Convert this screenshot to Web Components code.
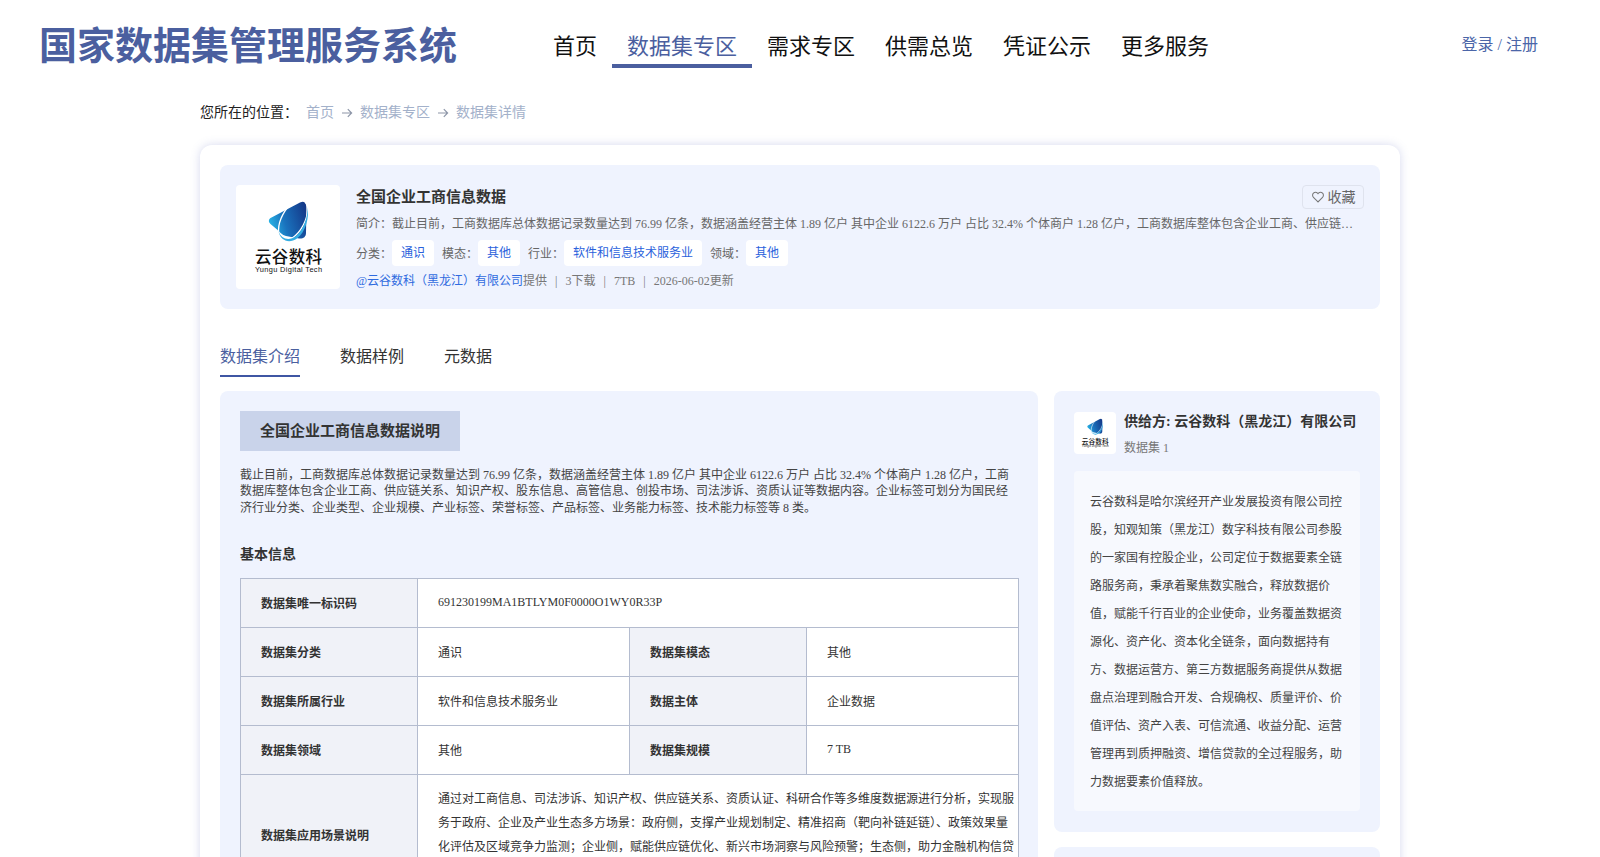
<!DOCTYPE html>
<html lang="zh">
<head>
<meta charset="utf-8">
<title>国家数据集管理服务系统</title>
<style>
	html, body { margin: 0; padding: 0; background: #fff; overflow: hidden; height: 857px; }
	body { font-family: "Liberation Serif", "Noto Sans CJK SC", serif; color: #333; }
</style>
</head>
<body>
<app-header></app-header>
<bread-crumb></bread-crumb>
<page-card>
	<data-summary></data-summary>
	<tab-bar></tab-bar>
	<div style="display:flex;gap:16px;align-items:flex-start">
		<intro-panel style="flex:0 0 817px"></intro-panel>
		<div style="flex:1;display:flex;flex-direction:column;gap:15px">
			<provider-card></provider-card>
			<side-panel></side-panel>
		</div>
	</div>
</page-card>

<script>
const FONT = `"Liberation Serif", "Noto Sans CJK SC", serif`;

class BrandLogo extends HTMLElement {
	constructor() {
		super();
		const id = 'g' + Math.random().toString(36).slice(2, 7);
		this.attachShadow({mode: 'open'}).innerHTML = `
			<style>
				:host { display: block; background: #fff; border-radius: 4px; overflow: hidden; }
				svg { display: block; width: 100%; height: 100%; }
				text { font-family: "Noto Sans CJK SC", sans-serif; fill: #111; }
			</style>
			<svg viewBox="0 0 104 104" xmlns="http://www.w3.org/2000/svg">
				<defs>
					<linearGradient id="${id}" x1="0" y1="0.6" x2="1" y2="0.3">
						<stop offset="0" stop-color="#27b4e6"/>
						<stop offset="0.4" stop-color="#1a72bd"/>
						<stop offset="1" stop-color="#143a8a"/>
					</linearGradient>
				</defs>
				<path d="M64 17.5 C68 15.5 70.5 17.5 70.5 21.5 L70 48 C70 52 67 54 63 53.5 L50 51 C46 50 43.5 47 41 44.5 L34.5 39 C32 36.5 32.5 34 35.5 32.5 Z" fill="url(#${id})"/>
				<ellipse cx="57" cy="35" rx="22" ry="11.5" transform="rotate(-62 57 35)" fill="none" stroke="#fff" stroke-width="1.3"/>
				<path d="M42.5 46 C45 54 53 56.5 60 51 C67.5 45 72 32 71.5 22 C73.5 33 69.5 47 61 53.5 C52.5 59.5 44 55 42.5 46 Z" fill="#35ade2"/>
				<text x="52.5" y="78" text-anchor="middle" font-size="16.5" font-weight="500" textLength="67">云谷数科</text>
				<text x="52.5" y="87" text-anchor="middle" font-size="7.4" textLength="67" style="font-family:'Liberation Sans',sans-serif">Yungu Digital Tech</text>
			</svg>`;
	}
}
customElements.define('brand-logo', BrandLogo);

const NavTemplate = document.createElement('template');
NavTemplate.innerHTML = `
	<style>
		:host { display: flex; align-items: flex-start; height: 91px; font-family: ${FONT}; box-sizing: border-box; padding: 0 62px 0 39px; }
		.title { font-size: 38px; font-weight: 700; color: #4b5f9f; line-height: 40px; margin-top: 26px; white-space: nowrap; width: 499px; }
		nav { display: flex; height: 68px; }
		nav a { display: block; box-sizing: border-box; height: 68px; padding: 35px 15px 0; font-size: 22px; line-height: 24px; color: #111; white-space: nowrap; }
		nav a.active { color: #4b5f9f; border-bottom: 4px solid #4b5f9f; }
		.login { margin-left: auto; font-size: 16px; line-height: 20px; margin-top: 35px; color: #4b66a8; white-space: nowrap; }
	</style>
	<div class="title">国家数据集管理服务系统</div>
	<nav>
		<a>首页</a><a class="active">数据集专区</a><a>需求专区</a><a>供需总览</a><a>凭证公示</a><a>更多服务</a>
	</nav>
	<div class="login">登录 / 注册</div>
`;
class AppHeader extends HTMLElement {
	constructor() {
		super();
		this.attachShadow({mode: 'open'}).append(NavTemplate.content.cloneNode(true));
	}
}
customElements.define('app-header', AppHeader);

class BreadCrumb extends HTMLElement {
	constructor() {
		super();
		const arrow = `<svg viewBox="0 0 12 10"><path d="M1 5h9.5M6.8 1.2 10.6 5 6.8 8.8" fill="none" stroke="#8d96a8" stroke-width="1.2"/></svg>`;
		this.attachShadow({mode: 'open'}).innerHTML = `
			<style>
				:host { display: flex; align-items: center; width: 1200px; margin: 0 auto; height: 40px; font-family: ${FONT}; font-size: 14px; color: #222; }
				a { color: #a3b1ca; }
				.here { margin-right: 8px; }
				svg { width: 12px; height: 10px; margin: 3px 7px 0; }
			</style>
			<span class="here">您所在的位置：</span>
			<a>首页</a>${arrow}<a>数据集专区</a>${arrow}<a>数据集详情</a>`;
	}
}
customElements.define('bread-crumb', BreadCrumb);

class PageCard extends HTMLElement {
	constructor() {
		super();
		this.attachShadow({mode: 'open'}).innerHTML = `
			<style>
				:host { display: block; box-sizing: border-box; width: 1200px; margin: 14px auto 0; padding: 20px 20px 24px; background: #fff; border-radius: 12px; box-shadow: 0 0 10px rgba(120, 130, 200, .3); font-family: ${FONT}; }
			</style>
			<slot></slot>`;
	}
}
customElements.define('page-card', PageCard);

class DataSummary extends HTMLElement {
	constructor() {
		super();
		this.attachShadow({mode: 'open'}).innerHTML = `
			<style>
				:host { display: flex; gap: 16px; box-sizing: border-box; height: 144px; padding: 20px 16px; background: #eff3fe; border-radius: 8px; }
				brand-logo { flex: 0 0 104px; width: 104px; height: 104px; }
				.body { flex: 1; min-width: 0; position: relative; }
				h2 { margin: 0; padding-top: 2px; font-size: 15px; line-height: 20px; font-weight: 700; color: #333; }
				.desc { margin-top: 7px; padding-right: 8px; font-size: 12px; line-height: 20px; color: #666; white-space: nowrap; overflow: hidden; text-overflow: ellipsis; }
				.tags { display: flex; align-items: center; margin-top: 6px; height: 26px; font-size: 12px; color: #666; }
				.tags b { font-weight: 400; }
				.tags span { background: #fff; color: #2a62dc; border-radius: 4px; padding: 0 9px; line-height: 26px; margin-right: 8px; }
				.meta { margin-top: 5px; font-size: 12px; line-height: 20px; color: #777; white-space: nowrap; }
				.meta a { color: #2f6bdf; }
				.meta i { font-style: normal; padding: 0 8px; }
				.fav { position: absolute; top: 0; right: 0; box-sizing: border-box; height: 24px; width: 62px; padding-bottom: 2px; display: flex; align-items: center; justify-content: center; gap: 3px; border: 1px solid #dfe3ee; border-radius: 4px; font-size: 14px; color: #666; }
				.fav svg { width: 14px; height: 14px; margin-top: 2px; }
			</style>
			<brand-logo></brand-logo>
			<div class="body">
				<h2>全国企业工商信息数据</h2>
				<div class="desc">简介：截止目前，工商数据库总体数据记录数量达到 76.99 亿条，数据涵盖经营主体 1.89 亿户 其中企业 6122.6 万户 占比 32.4% 个体商户 1.28 亿户，工商数据库整体包含企业工商、供应链关系、知识产权、股东信息、高管信息、创投市场、司法涉诉、资质认证等数据内容。</div>
				<div class="tags"><b>分类：</b><span>通识</span><b>模态：</b><span>其他</span><b>行业：</b><span>软件和信息技术服务业</span><b>领域：</b><span>其他</span></div>
				<div class="meta"><a>@云谷数科（黑龙江）有限公司</a>提供<i>|</i>3下载<i>|</i>7TB<i>|</i>2026-06-02更新</div>
				<div class="fav"><svg viewBox="0 0 24 24"><path d="M12 20.5 4.2 12.6a5 5 0 0 1 0-7.1 5 5 0 0 1 7 0l.8.8.8-.8a5 5 0 0 1 7 0 5 5 0 0 1 0 7.1Z" fill="none" stroke="#777" stroke-width="1.8"/></svg>收藏</div>
			</div>`;
	}
}
customElements.define('data-summary', DataSummary);

class TabBar extends HTMLElement {
	constructor() {
		super();
		this.attachShadow({mode: 'open'}).innerHTML = `
			<style>
				:host { display: flex; gap: 40px; height: 82px; padding-top: 15px; box-sizing: border-box; align-items: flex-start; }
				a { display: block; box-sizing: border-box; height: 53px; padding-top: 23px; font-size: 16px; line-height: 20px; color: #333; }
				a.active { color: #4b5f9f; border-bottom: 2px solid #3f56a3; }
			</style>
			<a class="active">数据集介绍</a><a>数据样例</a><a>元数据</a>`;
	}
}
customElements.define('tab-bar', TabBar);

class InfoTable extends HTMLElement {
	constructor() {
		super();
		this.attachShadow({mode: 'open'}).innerHTML = `
			<style>
				:host { display: block; font-size: 12px; color: #333; }
				table { width: 778px; border-collapse: collapse; table-layout: fixed; background: #fff; }
				td, th { border: 1px solid #b4bccf; padding: 0 0 0 20px; height: 49px; text-align: left; box-sizing: border-box; }
				th { background: #f0f2f8; font-weight: 700; }
				.long { line-height: 24px; padding: 12px 0 12px 20px; }
			</style>
			<table>
				<colgroup><col style="width:177px"><col style="width:212px"><col style="width:177px"><col style="width:212px"></colgroup>
				<tr><th>数据集唯一标识码</th><td colspan="3">691230199MA1BTLYM0F0000O1WY0R33P</td></tr>
				<tr><th>数据集分类</th><td>通识</td><th>数据集模态</th><td>其他</td></tr>
				<tr><th>数据集所属行业</th><td>软件和信息技术服务业</td><th>数据主体</th><td>企业数据</td></tr>
				<tr><th>数据集领域</th><td>其他</td><th>数据集规模</th><td>7 TB</td></tr>
				<tr><th>数据集应用场景说明</th><td colspan="3" class="long">通过对工商信息、司法涉诉、知识产权、供应链关系、资质认证、科研合作等多维度数据源进行分析，实现服务于政府、企业及产业生态多方场景：政府侧，支撑产业规划制定、精准招商（靶向补链延链）、政策效果量化评估及区域竞争力监测；企业侧，赋能供应链优化、新兴市场洞察与风险预警；生态侧，助力金融机构信贷决策与风险定价，促进产业协同发展。</td></tr>
			</table>`;
	}
}
customElements.define('info-table', InfoTable);

class IntroPanel extends HTMLElement {
	constructor() {
		super();
		this.attachShadow({mode: 'open'}).innerHTML = `
			<style>
				:host { display: block; box-sizing: border-box; padding: 20px 19px 20px 20px; background: #eff3fe; border-radius: 8px; }
				h3 { margin: 0; display: inline-block; box-sizing: border-box; height: 40px; line-height: 40px; padding: 0 20px; background: #c9d3ea; font-size: 15px; font-weight: 700; color: #333; vertical-align: top; }
				p { margin: 16px 0 0; font-size: 12px; line-height: 16.33px; color: #444; }
				h4 { margin: 29px 0 13px; font-size: 14px; line-height: 20px; font-weight: 700; color: #333; }
			</style>
			<h3>全国企业工商信息数据说明</h3>
			<p>截止目前，工商数据库总体数据记录数量达到 76.99 亿条，数据涵盖经营主体 1.89 亿户 其中企业 6122.6 万户 占比 32.4% 个体商户 1.28 亿户，工商数据库整体包含企业工商、供应链关系、知识产权、股东信息、高管信息、创投市场、司法涉诉、资质认证等数据内容。企业标签可划分为国民经济行业分类、企业类型、企业规模、产业标签、荣誉标签、产品标签、业务能力标签、技术能力标签等 8 类。</p>
			<h4>基本信息</h4>
			<info-table></info-table>`;
	}
}
customElements.define('intro-panel', IntroPanel);

class ProviderCard extends HTMLElement {
	constructor() {
		super();
		this.attachShadow({mode: 'open'}).innerHTML = `
			<style>
				:host { display: block; box-sizing: border-box; padding: 20px 20px 21px; background: #eff3fe; border-radius: 8px; }
				.head { display: flex; gap: 8px; height: 60px; }
				brand-logo { flex: 0 0 42px; width: 42px; height: 42px; margin-top: 1px; }
				.name { font-size: 14px; font-weight: 700; line-height: 20px; color: #333; white-space: nowrap; margin-top: 1px; }
				.count { font-size: 12px; line-height: 20px; color: #777; margin-top: 6px; }
				.about { box-sizing: border-box; background: #f7f9fe; border-radius: 4px; padding: 17px 16px 15px; font-size: 12px; line-height: 28px; color: #444; }
			</style>
			<div class="head">
				<brand-logo></brand-logo>
				<div>
					<div class="name">供给方: 云谷数科（黑龙江）有限公司</div>
					<div class="count">数据集 1</div>
				</div>
			</div>
			<div class="about">云谷数科是哈尔滨经开产业发展投资有限公司控股，知观知策（黑龙江）数字科技有限公司参股的一家国有控股企业，公司定位于数据要素全链路服务商，秉承着聚焦数实融合，释放数据价值，赋能千行百业的企业使命，业务覆盖数据资源化、资产化、资本化全链条，面向数据持有方、数据运营方、第三方数据服务商提供从数据盘点治理到融合开发、合规确权、质量评价、价值评估、资产入表、可信流通、收益分配、运营管理再到质押融资、增信贷款的全过程服务，助力数据要素价值释放。</div>`;
	}
}
customElements.define('provider-card', ProviderCard);

class SidePanel extends HTMLElement {
	constructor() {
		super();
		this.attachShadow({mode: 'open'}).innerHTML = `
			<style>:host { display: block; height: 120px; background: #eff3fe; border-radius: 8px; }</style>`;
	}
}
customElements.define('side-panel', SidePanel);
</script>
</body>
</html>
